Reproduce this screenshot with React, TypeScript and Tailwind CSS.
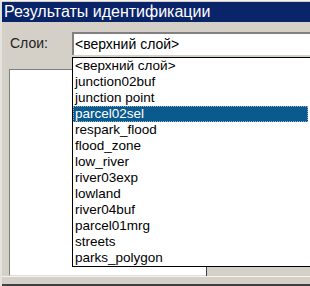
import React from "react";

const items = [
  "<верхний слой>",
  "junction02buf",
  "junction point",
  "parcel02sel",
  "respark_flood",
  "flood_zone",
  "low_river",
  "river03exp",
  "lowland",
  "river04buf",
  "parcel01mrg",
  "streets",
  "parks_polygon",
];

export default function App() {
  return (
    <div className="relative w-[310px] h-[286px] overflow-hidden bg-[#d4d0c8] font-['Liberation_Sans',Arial,sans-serif]">
      <div className="flex flex-col h-full border-t border-t-[#f4f3ef] border-l-2 border-l-[#e4e2dc] pt-px">
        <div className="h-5 bg-[#0a246a] text-white text-[16px] leading-5 pl-[2px] whitespace-nowrap">
          Результаты идентификации
        </div>
        <div className="flex items-center mt-[10px] h-[23px]">
          <span className="ml-2 w-[62px] text-[14px] text-[#222] leading-[23px]">Слои:</span>
          <div className="flex-1 h-[23px] bg-white border-t-2 border-l-2 border-t-[#808080] border-l-[#808080] text-[14px] leading-[20px] pl-[1px] text-black whitespace-nowrap">
            &lt;верхний слой&gt;
          </div>
        </div>
        <div className="flex mt-[14px] h-[207px]">
          <div className="ml-[7px] w-[197px] bg-white border-t border-l border-t-[#808080] border-l-[#808080] border-b border-b-[#e0ded8]" />
          <div className="flex-1 border-l border-l-[#404040] mt-[2px]" />
        </div>
        <div className="flex-1 border-t border-t-[#f4f3ef] border-b-2 border-b-[#404040]" />
      </div>

      <div className="absolute left-[72px] top-[57px] w-[300px] h-[210px] border border-black bg-white">
        {items.map((it) => {
          const sel = it === "parcel02sel";
          return (
            <div
              key={it}
              className={
                sel
                  ? "h-4 w-[235px] bg-[#0b5a8e] text-white border border-dotted border-[#8fb0c8] text-[13.5px] leading-[14px] pl-[1px] whitespace-nowrap"
                  : "h-4 text-black text-[13.5px] leading-4 pl-[2px] whitespace-nowrap"
              }
            >
              {it}
            </div>
          );
        })}
      </div>
    </div>
  );
}
